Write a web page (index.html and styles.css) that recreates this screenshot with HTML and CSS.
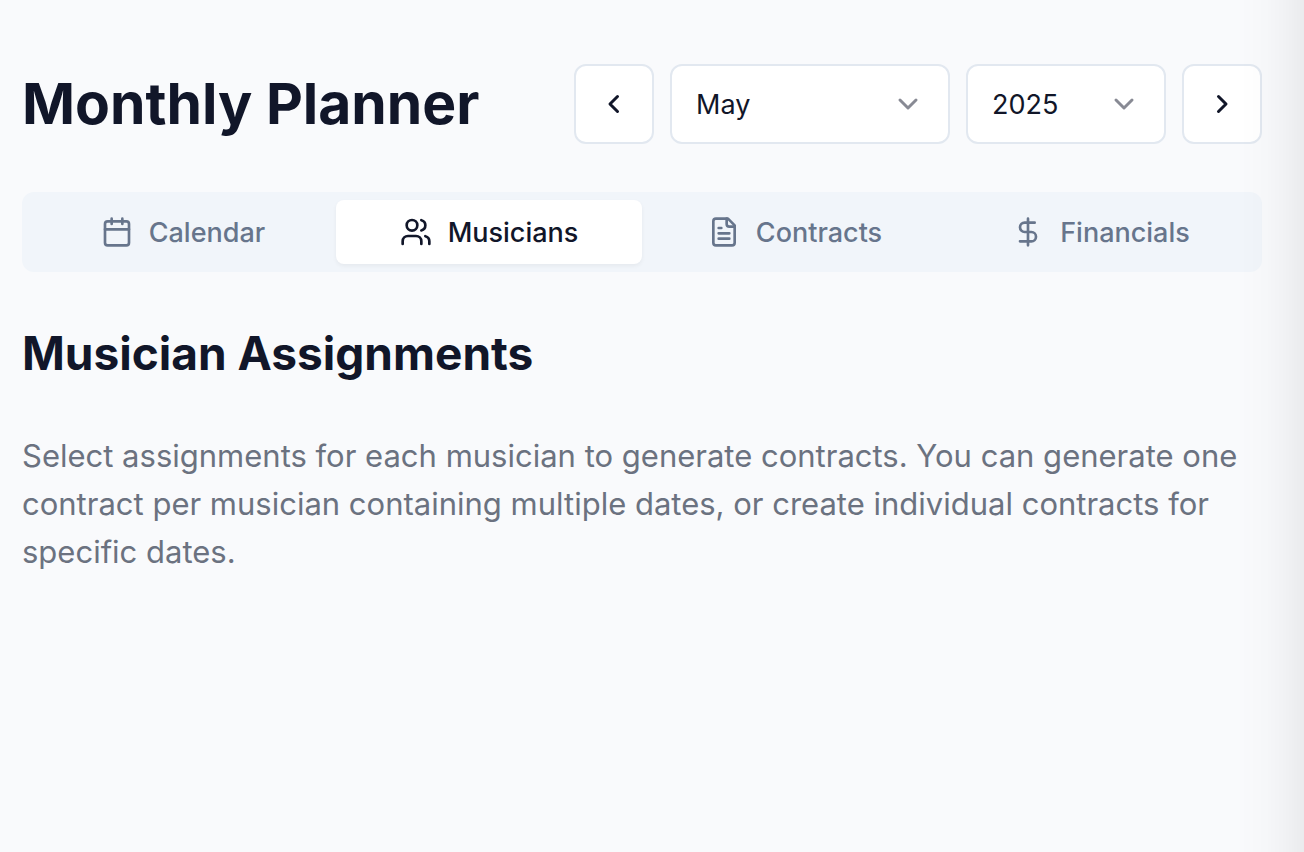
FILE: index.html
```html
<!DOCTYPE html>
<html lang="en">
<head>
<meta charset="utf-8">
<meta name="viewport" content="width=device-width, initial-scale=1">
<title>Monthly Planner</title>
<link rel="stylesheet" href="styles.css">
</head>
<body>
<main class="page">
  <header class="header">
    <h1 class="title">Monthly Planner</h1>
    <div class="controls">
      <button class="step" type="button" aria-label="Previous month">
        <svg class="icon-step" viewBox="0 0 32 32" aria-hidden="true"><path d="M19.5 8.5 12 16l7.5 7.5"/></svg>
      </button>
      <div class="picker picker-month">
        <select class="select" aria-label="Month"><option>April</option><option selected>May</option><option>June</option></select>
        <svg class="chevron" viewBox="0 0 32 32" aria-hidden="true"><path d="m8 12 8 8 8-8"/></svg>
      </div>
      <div class="picker picker-year">
        <select class="select" aria-label="Year"><option>2024</option><option selected>2025</option><option>2026</option></select>
        <svg class="chevron" viewBox="0 0 32 32" aria-hidden="true"><path d="m8 12 8 8 8-8"/></svg>
      </div>
      <button class="step" type="button" aria-label="Next month">
        <svg class="icon-step" viewBox="0 0 32 32" aria-hidden="true"><path d="M12.5 8.5 20 16l-7.5 7.5"/></svg>
      </button>
    </div>
  </header>

  <div class="tabs" role="tablist">
    <button class="tab" type="button" role="tab" aria-selected="false">
      <svg class="icon" viewBox="0 0 24 24" aria-hidden="true"><path d="M8 2v4M16 2v4M3 10h18"/><rect width="18" height="18" x="3" y="4" rx="2"/></svg>
      Calendar
    </button>
    <button class="tab tab-active" type="button" role="tab" aria-selected="true" aria-controls="musicians" id="tab-musicians">
      <svg class="icon" viewBox="0 0 24 24" aria-hidden="true"><path d="M16 21v-2a4 4 0 0 0-4-4H6a4 4 0 0 0-4 4v2"/><circle cx="9" cy="7" r="4"/><path d="M22 21v-2a4 4 0 0 0-3-3.87M16 3.13a4 4 0 0 1 0 7.75"/></svg>
      Musicians
    </button>
    <button class="tab" type="button" role="tab" aria-selected="false">
      <svg class="icon" viewBox="0 0 24 24" aria-hidden="true"><path d="M15 2H6a2 2 0 0 0-2 2v16a2 2 0 0 0 2 2h12a2 2 0 0 0 2-2V7Z"/><path d="M14 2v4a2 2 0 0 0 2 2h4M10 9H8M16 13H8M16 17H8"/></svg>
      Contracts
    </button>
    <button class="tab" type="button" role="tab" aria-selected="false">
      <svg class="icon" viewBox="0 0 24 24" aria-hidden="true"><path d="M12 2v20M17 5H9.5a3.5 3.5 0 0 0 0 7h5a3.5 3.5 0 0 1 0 7H6"/></svg>
      Financials
    </button>
  </div>

  <section class="panel" id="musicians" role="tabpanel" aria-labelledby="tab-musicians">
    <h2 class="subtitle">Musician Assignments</h2>
    <p class="description">Select assignments for each musician to generate contracts. You can generate one contract per musician containing multiple dates, or create individual contracts for specific dates.</p>
  </section>
</main>
<div class="edge-shade"></div>
</body>
</html>
```
FILE: styles.css
```css
* {
  box-sizing: border-box;
}

body {
  margin: 0;
  min-height: 100vh;
  background: #f9fafc;
  color: #111629;
  font-family: Inter, "Liberation Sans", sans-serif;
}

.page {
  padding: 64px 42px 64px 22px;
}

.header {
  display: flex;
  align-items: center;
  justify-content: space-between;
  gap: 16px;
}

.title,
.subtitle,
.description {
  margin: 0;
}

.title {
  font-size: 57px;
  line-height: 80px;
  font-weight: 700;
  white-space: nowrap;
}

.controls {
  display: flex;
  gap: 16px;
}

.step,
.select {
  height: 80px;
  border: 2px solid #e2e8f0;
  border-radius: 12px;
  background: #fff;
  color: inherit;
}

.step {
  display: flex;
  align-items: center;
  justify-content: center;
  width: 80px;
  padding: 0;
}

.icon-step,
.chevron {
  width: 32px;
  height: 32px;
  fill: none;
  stroke: currentColor;
  stroke-width: 3;
  stroke-linecap: round;
  stroke-linejoin: round;
}

.picker {
  display: grid;
  align-items: center;
}

.picker > * {
  grid-area: 1 / 1;
}

.picker-month {
  width: 280px;
}

.picker-year {
  width: 200px;
}

.select {
  appearance: none;
  width: 100%;
  padding: 0 24px;
  font-family: inherit;
  font-size: 27px;
}

.chevron {
  justify-self: end;
  margin-right: 26px;
  color: #888a94;
  pointer-events: none;
}

.tabs {
  display: grid;
  grid-template-columns: repeat(4, 1fr);
  margin-top: 48px;
  padding: 8px;
  border-radius: 12px;
  background: #f1f5fa;
}

.tab {
  display: flex;
  align-items: center;
  justify-content: center;
  gap: 16px;
  height: 64px;
  padding: 0;
  border: 0;
  border-radius: 8px;
  background: transparent;
  color: #67758c;
  font-family: inherit;
  font-size: 27px;
  font-weight: 500;
}

.tab-active {
  background: #fff;
  color: #111629;
  box-shadow: 0 2px 4px rgb(0 0 0 / 5%);
}

.icon {
  width: 32px;
  height: 32px;
  fill: none;
  stroke: currentColor;
  stroke-width: 2;
  stroke-linecap: round;
  stroke-linejoin: round;
}

.panel {
  display: grid;
  gap: 46px;
  margin-top: 48px;
}

.subtitle {
  font-size: 46px;
  line-height: 66px;
  font-weight: 650;
}

.description {
  color: #6b7280;
  font-size: 31px;
  line-height: 48px;
}

.edge-shade {
  position: fixed;
  inset: 0 0 0 auto;
  width: 64px;
  background: linear-gradient(to right, rgb(0 0 0 / 0%), rgb(0 0 0 / 1%) 40%, rgb(0 0 0 / 3%) 70%, rgb(0 0 0 / 6%));
  pointer-events: none;
}
```
